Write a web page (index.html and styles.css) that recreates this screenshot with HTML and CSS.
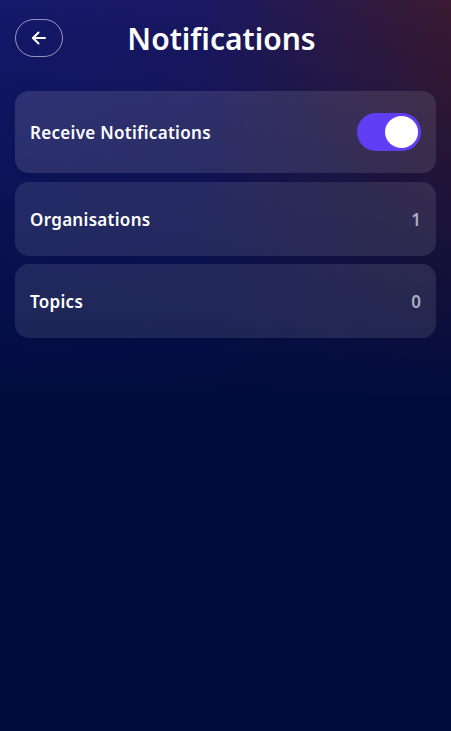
FILE: index.html
```html
<!doctype html>
<html lang="en">
    <head>
        <meta charset="UTF-8" />
        <meta name="viewport" content="width=device-width, initial-scale=1.0" />
        <title>Notifications</title>
        <link rel="stylesheet" href="styles.css">
    </head>
    <body>
        <div class="screen">
            <header class="top">
                <button class="back" aria-label="Back">
                    <svg width="20" height="20" viewBox="0 0 20 20" fill="none" stroke="#fff" stroke-width="2" stroke-linecap="round" stroke-linejoin="round">
                        <path d="M16 10H4" />
                        <path d="M9.5 4.5L4 10l5.5 5.5" />
                    </svg>
                </button>
                <h1>Notifications</h1>
            </header>

            <div class="list">
                <div class="row first">
                    <span class="label">Receive Notifications</span>
                    <span class="toggle on"><span class="knob"></span></span>
                </div>
                <div class="row">
                    <span class="label">Organisations</span>
                    <span class="count">1</span>
                </div>
                <div class="row">
                    <span class="label">Topics</span>
                    <span class="count">0</span>
                </div>
            </div>
        </div>
    </body>
</html>
```

FILE: styles.css
```css
* {
    margin: 0;
    padding: 0;
    box-sizing: border-box;
}
body {
    min-height: 100vh;
    font-family: "Noto Sans", "Open Sans", sans-serif;
    color: #fff;
    background: #010c3e;
}
.screen {
    min-height: 100vh;
    padding: 19px 15px;
    background:
        linear-gradient(180deg, rgba(1, 12, 62, 0) 0%, rgba(1, 12, 62, 0.55) 30%, #010c3e 55%),
        linear-gradient(90deg, #15186c 0%, #1a1862 45%, #2c1a46 75%, #3b1a31 100%);
}

.top {
    display: flex;
    align-items: center;
    height: 38px;
}
.back {
    width: 48px;
    height: 38px;
    border-radius: 19px;
    border: 1px solid rgba(255, 255, 255, 0.55);
    background: transparent;
    display: grid;
    place-items: center;
}
.top h1 {
    flex: 1;
    text-align: center;
    font-size: 30px;
    font-weight: 600;
    margin-right: 56px;
    margin-top: 1px;
}

.list {
    margin-top: 34px;
    display: flex;
    flex-direction: column;
    gap: 8px;
}
.row {
    height: 74px;
    border-radius: 14px;
    padding: 0 15px;
    display: flex;
    align-items: center;
    justify-content: space-between;
    background: rgba(255, 255, 255, 0.1);
}
.row.first {
    height: 82px;
    margin-bottom: 1px;
    background: linear-gradient(90deg, rgba(255, 255, 255, 0.12), rgba(255, 255, 255, 0.1));
}
.label {
    font-size: 17px;
    font-weight: 600;
    letter-spacing: 0.3px;
}
.count {
    font-size: 17px;
    font-weight: 600;
    color: #a9adc4;
}

.toggle {
    width: 64px;
    height: 38px;
    border-radius: 19px;
    background: #603ef5;
    padding: 3px;
    display: flex;
    justify-content: flex-end;
}
.knob {
    width: 33px;
    height: 32px;
    border-radius: 50%;
    background: #fff;
}
```
